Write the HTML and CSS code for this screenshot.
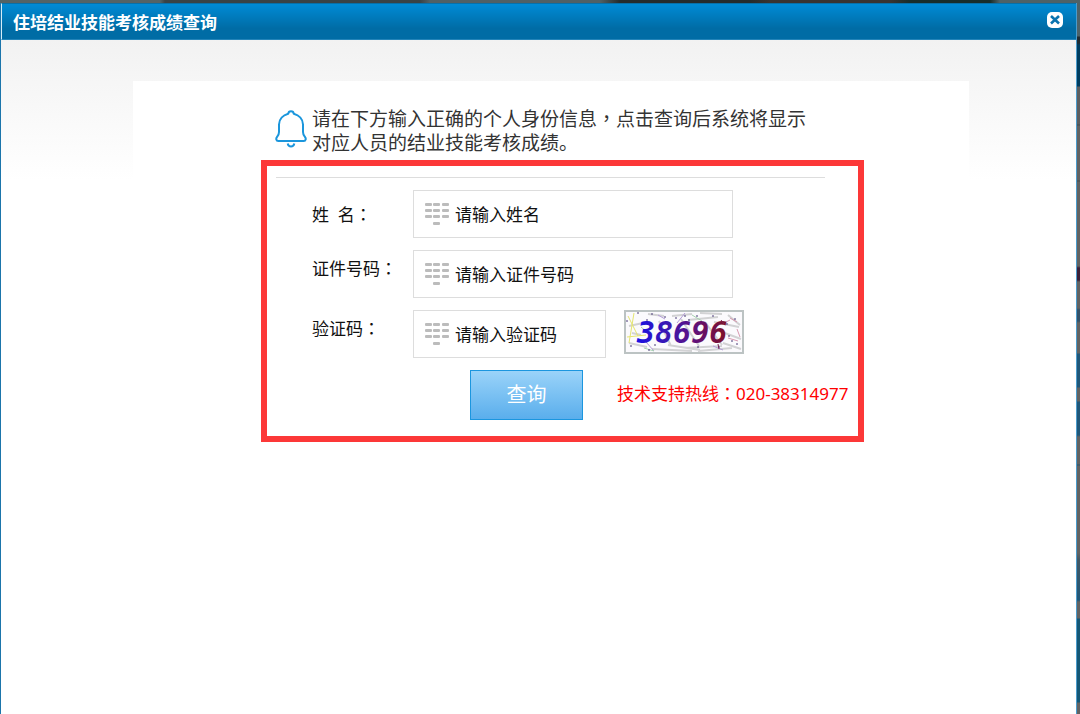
FILE: index.html
```html
<!DOCTYPE html>
<html lang="zh-CN">
<head>
<meta charset="utf-8">
<meta name="viewport" content="width=device-width, initial-scale=1">
<title>住培结业技能考核成绩查询</title>
<link rel="stylesheet" href="styles.css">
</head>
<body>
<svg class="sprite" aria-hidden="true">
  <symbol id="keypad" viewBox="0 0 24 22">
    <g fill="#bcbcbc">
      <rect x="0" y="0" width="7" height="3" rx="1"/><rect x="8" y="0" width="7" height="3" rx="1"/><rect x="17" y="0" width="7" height="3" rx="1"/>
      <rect x="0" y="6" width="7" height="3" rx="1"/><rect x="8" y="6" width="7" height="3" rx="1"/><rect x="17" y="6" width="7" height="3" rx="1"/>
      <rect x="0" y="12" width="7" height="3" rx="1"/><rect x="8" y="12" width="7" height="3" rx="1"/><rect x="17" y="12" width="7" height="3" rx="1"/>
      <rect x="8" y="19" width="7" height="3" rx="1"/>
    </g>
  </symbol>
</svg>
<main class="dialog">
  <header class="titlebar">
    <h1 class="title">住培结业技能考核成绩查询</h1>
    <button class="close" type="button" aria-label="关闭">
      <svg viewBox="0 0 18 18" width="18" height="18"><rect x="1" y="1" width="16" height="16" rx="5" fill="#fff"/><path d="M5 5 13 12.500M13 5 5 12.500" stroke="#0a74b0" stroke-width="2.600"/></svg>
    </button>
  </header>
  <div class="content">
    <section class="panel">
      <div class="notice">
        <svg class="bell" viewBox="0 0 32 38" width="32" height="38" fill="none" stroke="#1b96dc" stroke-width="2" stroke-linejoin="round">
          <path d="M13.2 3.8C13.4 2 14.4 1.3 16 1.3s2.600.7 2.800 2.500C24 5.200 28 9.200 28 14.500V22c0 2.600.6 3.600 2 5 1.200 1.400 1 4-1.300 4H3.300c-2.300 0-2.500-2.600-1.300-4C3.400 25.600 4 24.600 4 22v-7.500C4 9.200 8 5.200 13.200 3.800Z"/>
          <path d="M12.700 33.500c.4 2 1.500 3 3.300 3s2.900-1 3.300-3"/>
        </svg>
        <p class="notice-text">请在下方输入正确的个人身份信息<span class="mark" lang="zh-TW">，</span>点击查询后系统将显示<br>对应人员的结业技能考核成绩。</p>
      </div>
      <form class="query">
        <hr class="rule">
        <div class="row">
          <label class="label" for="name">姓&nbsp; 名<span class="mark" lang="zh-TW">：</span></label>
          <div class="field"><svg class="keypad"><use href="#keypad"/></svg><input class="input" id="name" type="text" placeholder="请输入姓名"></div>
        </div>
        <div class="row">
          <label class="label raised" for="idno">证件号码<span class="mark" lang="zh-TW">：</span></label>
          <div class="field"><svg class="keypad"><use href="#keypad"/></svg><input class="input" id="idno" type="text" placeholder="请输入证件号码"></div>
        </div>
        <div class="row">
          <label class="label raised" for="code">验证码<span class="mark" lang="zh-TW">：</span></label>
          <div class="field short"><svg class="keypad"><use href="#keypad"/></svg><input class="input" id="code" type="text" placeholder="请输入验证码"></div>
          <svg class="captcha" viewBox="0 0 120 44" width="120" height="44" role="img" aria-label="38696">
            <defs>
              <linearGradient id="ink" gradientUnits="userSpaceOnUse" x1="14" y1="0" x2="102" y2="0"><stop offset="0" stop-color="#1c10e0"/><stop offset=".35" stop-color="#3c18b0"/><stop offset=".6" stop-color="#5c1084"/><stop offset="1" stop-color="#7e1028"/></linearGradient>
            </defs>
            <rect x="1" y="1" width="118" height="42" fill="#fbfafd" stroke="#bcc3c3" stroke-width="2"/>
            <g fill="none" stroke="#d2d2d4" stroke-width="2">
              <path d="M24 4l16 2M48 6l20-2M76 3l22 1M64 10l30-3M90 12l25 5M5 16l14-3M5 33l18 4M28 39l40 2M44 35l32 5M60 38l38-2M74 41l34-3M98 22l19 7M99 33l18 6M104 5l12 10M35 11l12 25M57 9l18 27M81 12l17 23M8 23l9 2"/>
            </g>
            <g fill="none" stroke-width="1">
              <path d="M4 6l10 20M10 3l-5 30M3 27l19-2" stroke="#e5e570"/>
              <path d="M34 5l7 4M61 3l-8 10M89 36l10 4M22 32l8 9" stroke="#b39bd8"/>
              <path d="M106 8l7 4M104 28l10 3M113 19l3 8M100 13l6-3" stroke="#d898b0"/>
              <path d="M17 17l6 5M20 38l10 3M68 5l10 6" stroke="#a8d4b0"/>
            </g>
            <text class="captcha-text" x="13" y="33" fill="url(#ink)">38696</text>
            <g fill="none" stroke="#4a3d78" stroke-width="1">
              <path d="M13 3h2M27 4h2M40 7h2M22 10h2M6 36h2M24 40h2M30 35h2M51 8h2M60 6h2M72 6h2M88 6h2M102 14h2M110 9h2M107 31h2M112 34h2M94 37h2M73 37h2M104 26h2M2 11h2M64 10h2"/>
              <path d="M97 10l3 4M94 34l1 5" stroke="#7a2350"/>
            </g>
          </svg>
        </div>
        <div class="actions">
          <button class="submit" type="submit">查询</button>
          <p class="hotline">技术支持热线<span class="mark" lang="zh-TW">：</span>020-38314977</p>
        </div>
      </form>
    </section>
  </div>
</main>
</body>
</html>
```
FILE: styles.css
```css
* { box-sizing: border-box; }

body {
  margin: 0;
  min-height: 100vh;
  display: flex;
  padding: 3px 3px 0 0;
  font-family: "Noto Sans", "Noto Sans CJK SC", sans-serif;
  font-size: 17px;
  line-height: 24px;
  color: #111;
  background:
    linear-gradient(90deg, #536366 0 160px, #394346 165px 420px, #506064 430px 600px, #252c2d 620px 750px, #393431 770px 890px, #182d2a 910px 990px, #4e6268 1000px) top / 100% 3px no-repeat,
    linear-gradient(#4e6268 0 36px, #202b31 37px 43px, #003d60 45px 86px, #5d5e60 87px 124px, #414b50 125px, #626262 126px 180px, #454d50 181px, #626262 182px 266px, #3b2038 268px 280px, #626262 282px 308px, #345269 310px 321px, #626262 323px 353px, #205779 354px 387px, #626262 388px 401px, #205779 402px 435px, #626262 437px 464px, #28536b 465px, #626262 466px 553px, #425764 560px, #205779 600px, #626262 602px 618px, #145776 619px 702px, #626262 703px);
}

.sprite { position: absolute; width: 0; height: 0; }

/* Centres full-width punctuation in its cell. */
.mark { font-family: "Noto Sans CJK TC", sans-serif; }

.dialog {
  flex: 1;
  min-width: 0;
  display: flex;
  flex-direction: column;
  border-left: 1px solid #1b75ab;
  border-right: 1px solid #4a9bcc;
  background: #fff;
}

.titlebar {
  display: flex;
  align-items: flex-start;
  justify-content: space-between;
  height: 37px;
  padding: 7px 12px 0 11px;
  border-top: 1px solid #0870a8;
  border-bottom: 1px solid #2384b9;
  border-left: 1px solid #d6edf8;
  background: linear-gradient(#008bd6, #006ca5 70%);
}

.title {
  margin: 0;
  font-size: 17px;
  line-height: 24px;
  font-weight: 700;
  color: #fff;
}

.close {
  display: flex;
  padding: 0;
  border: 0;
  background: none;
}

.content {
  flex: 1;
  display: flex;
  padding: 41px 107px 0 132px;
  background: linear-gradient(#f2f2f2, #fff 140px);
}

.panel {
  flex: 1;
  min-width: 0;
  padding: 25px 105px 0 128px;
  background: #fff;
}

.notice {
  display: flex;
  gap: 5px;
  padding-left: 14px;
}

.bell { flex: none; margin-top: 4px; }

.notice-text {
  margin: 0;
  font-size: 19px;
  line-height: 24px;
  color: #333;
}

.query {
  margin-top: 5px;
  padding: 11px 9px 16px;
  border: 6px solid #fc3838;
}

.rule {
  margin: 0 24px 12px 0;
  border: 0;
  border-top: 1px solid #ddd;
}

.row {
  display: flex;
  align-items: center;
  margin-bottom: 12px;
  padding-left: 36px;
}

.label { width: 101px; flex: none; }

.raised { padding-bottom: 12px; }

.field {
  display: flex;
  align-items: center;
  gap: 6px;
  flex: 0 1 320px;
  min-width: 0;
  height: 48px;
  padding: 0 11px;
  border: 1px solid #ddd;
}

.short { flex-basis: 193px; }

.keypad { flex: none; width: 24px; height: 22px; }

.input {
  flex: 1;
  min-width: 0;
  padding: 2px 0 0;
  border: 0;
  outline: 0;
  font: inherit;
  color: inherit;
  background: none;
}

.input::placeholder { color: #111; opacity: 1; }

.captcha { flex: none; margin-left: 18px; margin-bottom: 4px; }

.captcha-text {
  font-family: "DejaVu Sans Mono", monospace;
  font-size: 30px;
  font-weight: 700;
  font-style: italic;
}

.actions {
  display: flex;
  align-items: center;
  gap: 34px;
  padding-left: 194px;
}

.submit {
  flex: none;
  width: 113px;
  height: 50px;
  padding: 0;
  border: 1px solid #1b96df;
  font: inherit;
  font-size: 20px;
  color: #fff;
  background: linear-gradient(#9ad3f9, #5aaeec);
}

.hotline {
  margin: 0;
  padding-bottom: 3px;
  white-space: nowrap;
  color: #f00;
}
```
